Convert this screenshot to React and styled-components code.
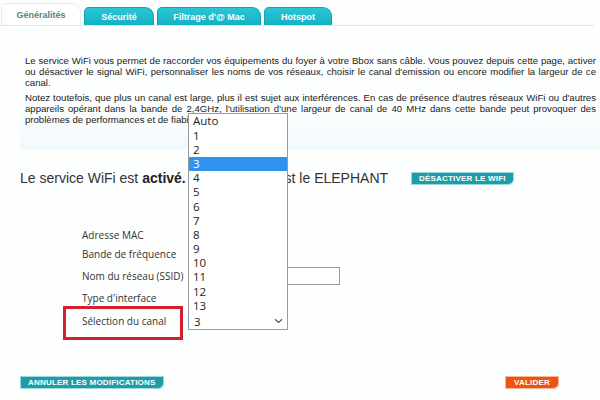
import React from 'react';
import styled, { createGlobalStyle } from 'styled-components';

const GlobalStyle = createGlobalStyle`
  body {
    margin: 0;
    background: #fff;
    font-family: "Liberation Sans", Arial, sans-serif;
  }
`;

const Page = styled.div`
  width: 600px;
  height: 400px;
  display: flex;
  flex-direction: column;
  overflow: hidden;
  background: #fdfefe;
`;

const TabBar = styled.div`
  display: flex;
  align-items: flex-end;
  height: 25px;
  padding-left: 1px;
  border-bottom: 1px solid #dfe3e4;
  margin-right: 6px;
  flex-shrink: 0;
`;

const Tab = styled.div`
  height: ${p => (p.active ? '22px' : '18px')};
  width: ${p => p.w}px;
  margin-right: 3px;
  display: flex;
  align-items: center;
  justify-content: center;
  font-size: 9px;
  font-weight: bold;
  border-radius: 5px 9px 0 0;
  color: ${p => (p.active ? '#5d7e85' : '#fff')};
  background: ${p => (p.active ? '#fff' : 'linear-gradient(#2ac6d6, #14b1c2)')};
  border: ${p => (p.active ? '1px solid #e6ebec' : '1px solid #0fa2b3')};
  border-bottom: none;
  box-sizing: border-box;
`;

const InfoBox = styled.div`
  margin: 24px 0 0 20px;
  height: 100px;
  box-sizing: border-box;
  padding: 5px 4px 0 5px;
  background: linear-gradient(#fdfefe 0%, #fdfefe 55%, #f1f9fc 100%);
  font-size: 9.6px;
  line-height: 11px;
  color: #222;
  text-align: justify;
  flex-shrink: 0;
  p {
    margin: 0 0 4px 0;
  }
`;

const StatusRow = styled.div`
  display: flex;
  align-items: center;
  margin: 19px 0 0 20px;
  height: 18px;
  flex-shrink: 0;
`;

const StatusText = styled.div`
  font-size: 14px;
  color: #333;
  width: 391px;
  white-space: pre;
  b {
    color: #222;
  }
`;

const FlatButton = styled.div`
  display: inline-flex;
  align-items: center;
  height: 13px;
  padding: 0 ${p => p.pad || 8}px;
  background: ${p => p.color};
  color: #fff;
  font-size: 8px;
  font-weight: bold;
  letter-spacing: 0.2px;
  border-radius: 1px 1px 6px 1px;
  box-shadow: 0 0 0 1px rgba(255, 255, 255, 0.6) inset;
`;

const Form = styled.div`
  display: grid;
  grid-template-columns: 106px 160px;
  margin: 39px 0 0 82px;
  font-family: "Open Sans", "DejaVu Sans", sans-serif;
  font-size: 10px;
  color: #333;
`;

const Label = styled.div`
  height: ${p => p.h}px;
  display: flex;
  align-items: center;
`;

const Cell = styled.div`
  height: ${p => p.h}px;
  display: flex;
  align-items: center;
  position: relative;
`;

const TextInput = styled.div`
  width: 152px;
  height: 18px;
  border: 1px solid #999;
  box-sizing: border-box;
  background: #fff;
`;

const Select = styled.div`
  position: relative;
  width: 100px;
  height: 18px;
  border: 1px solid #7ea6c9;
  box-sizing: border-box;
  background: #fff;
  display: flex;
  align-items: center;
  justify-content: space-between;
  padding: 0 4px 0 5px;
  font-size: 11.5px;
  color: #222;
`;

const Highlight = styled.div`
  position: absolute;
  left: -125px;
  top: -2px;
  width: 120px;
  height: 34px;
  border: 3px solid #d3202b;
  box-sizing: border-box;
`;

const List = styled.div`
  position: absolute;
  left: -1px;
  bottom: 100%;
  width: 100px;
  border: 1px solid #9a9a9a;
  border-bottom: none;
  box-sizing: border-box;
  background: #fff;
  z-index: 2;
`;

const Option = styled.div`
  height: 14.2px;
  line-height: 14px;
  padding-left: 4px;
  font-size: 11.5px;
  color: ${p => (p.selected ? '#fff' : '#222')};
  background: ${p => (p.selected ? '#3192f0' : 'transparent')};
`;

const Footer = styled.div`
  margin: auto 41px 11px 20px;
  display: flex;
  justify-content: space-between;
`;

const options = ['Auto', '1', '2', '3', '4', '5', '6', '7', '8', '9', '10', '11', '12', '13'];

const rows = [
  { label: 'Adresse MAC', h: 18 },
  { label: 'Bande de fréquence', h: 20 },
  { label: 'Nom du réseau (SSID)', h: 24, input: true },
  { label: "Type d'interface", h: 20 },
];

function App() {
  return (
    <Page>
      <GlobalStyle />
      <TabBar>
        <Tab active w={80}>Généralités</Tab>
        <Tab w={70}>Sécurité</Tab>
        <Tab w={104}>Filtrage d'@ Mac</Tab>
        <Tab w={68}>Hotspot</Tab>
      </TabBar>

      <InfoBox>
        <p>
          Le service WiFi vous permet de raccorder vos équipements du foyer à votre Bbox sans câble. Vous pouvez
          depuis cette page, activer ou désactiver le signal WiFi, personnaliser les noms de vos réseaux, choisir le
          canal d'emission ou encore modifier la largeur de ce canal.
        </p>
        <p>
          Notez toutefois, que plus un canal est large, plus il est sujet aux interférences. En cas de présence
          d'autres réseaux WiFi ou d'autres appareils opérant dans la bande de 2,4GHz, l'utilisation d'une largeur de
          canal de 40 MHz dans cette bande peut provoquer des problèmes de performances et de fiabilité.
        </p>
      </InfoBox>

      <StatusRow>
        <StatusText>
          Le service WiFi est <b>activé.</b>  Votre réseau est le ELEPHANT
        </StatusText>
        <FlatButton color="#1c9ea8">DÉSACTIVER LE WIFI</FlatButton>
      </StatusRow>

      <Form>
        {rows.map(r => (
          <React.Fragment key={r.label}>
            <Label h={r.h}>{r.label}</Label>
            <Cell h={r.h}>{r.input && <TextInput />}</Cell>
          </React.Fragment>
        ))}
        <Label h={26}>Sélection du canal</Label>
        <Cell h={26}>
          <Highlight />
          <Select>
            <List>
              {options.map(o => (
                <Option key={o} selected={o === '3'}>{o}</Option>
              ))}
            </List>
            <span>3</span>
            <svg width="9" height="6" viewBox="0 0 9 6">
              <path d="M1 1.2 L4.5 4.5 L8 1.2" fill="none" stroke="#555" strokeWidth="1.2" />
            </svg>
          </Select>
        </Cell>
      </Form>

      <Footer>
        <FlatButton color="#1c9ea8">ANNULER LES MODIFICATIONS</FlatButton>
        <FlatButton color="#f0520f" pad={9}>VALIDER</FlatButton>
      </Footer>
    </Page>
  );
}

export default App;
